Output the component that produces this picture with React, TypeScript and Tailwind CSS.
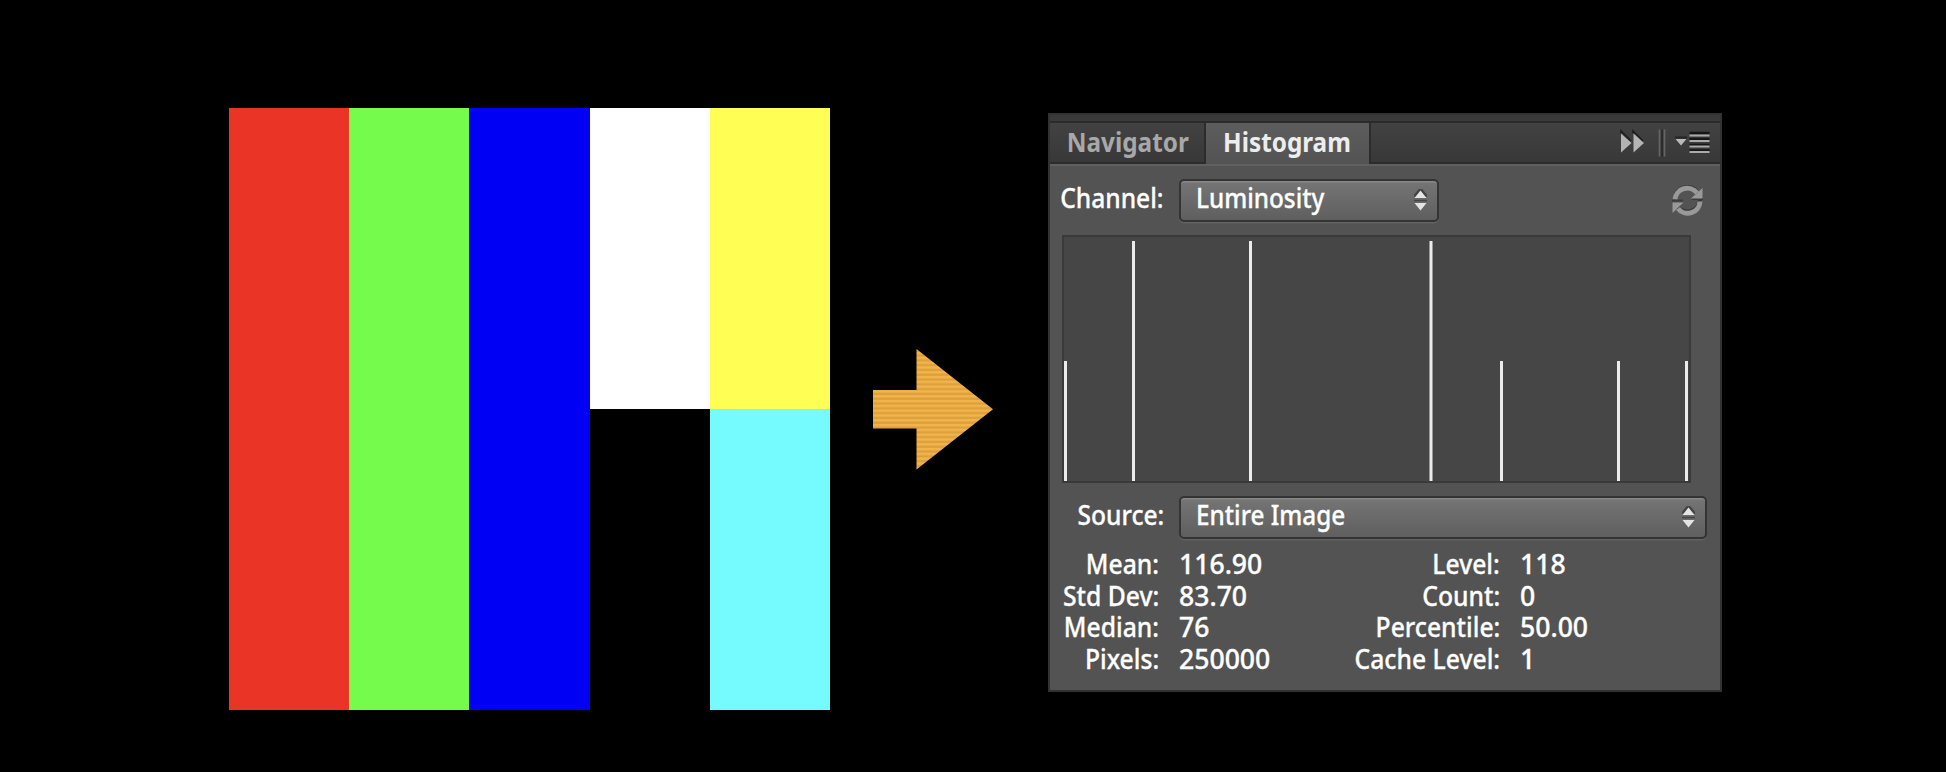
import type { ReactNode } from "react";

const bars = [
  { x: 1.5, h: 120 },
  { x: 69.5, h: 240 },
  { x: 186.5, h: 240 },
  { x: 367, h: 240 },
  { x: 437.5, h: 120 },
  { x: 554.5, h: 120 },
  { x: 622.5, h: 120 },
];

function ColorBars() {
  return (
    <div className="mt-[108px] ml-[229px] grid h-[602px] w-[601px] shrink-0 grid-cols-5">
      <div className="bg-[#ea3425]" />
      <div className="bg-[#75fb4c]" />
      <div className="bg-[#0000f5]" />
      <div className="flex flex-col">
        <div className="h-[301px] bg-white" />
        <div className="flex-1 bg-black" />
      </div>
      <div className="flex flex-col">
        <div className="h-[301px] bg-[#fffe54]" />
        <div className="flex-1 bg-[#75fbfd]" />
      </div>
    </div>
  );
}

function Arrow() {
  return (
    <svg className="mt-[349px] ml-[43px] shrink-0" width="120" height="121" viewBox="0 0 120 121">
      <defs>
        <pattern id="stripes" width="120" height="4.8" patternUnits="userSpaceOnUse">
          <rect width="120" height="4.8" fill="#f2b44a" />
          <rect y="0.6" width="120" height="2.2" fill="#dca03c" />
        </pattern>
      </defs>
      <path d="M0 41H43.5V0L120 60.3 43.5 120.5V79.500H0Z" fill="url(#stripes)" />
    </svg>
  );
}

function Select({ children, className }: { children: ReactNode; className: string }) {
  return (
    <div
      className={`flex h-[43px] items-center justify-between rounded-[5px] border-[2.5px] border-[#343434] bg-linear-to-b from-[#757575] to-[#5f5f5f] pr-[10px] pl-[15px] shadow-[0_1.500px_0_#626262,inset_0_1.500px_0_#868686] ${className}`}
    >
      <span className="origin-left scale-x-[0.9] pb-[6px]">{children}</span>
      <svg className="-mt-px" width="13" height="22" viewBox="0 0 13 22">
        <path d="M6.500 -1 0 7H13ZM0 11.500H13" fill="#444" stroke="#444" strokeWidth="1.500" />
        <path d="M6.500 1.500 0.500 9H12.500ZM0.500 14H12.500L6.500 21.500Z" fill="#e4e4e4" />
      </svg>
    </div>
  );
}

function Stat({ label, value, wide }: { label: string; value: string; wide?: boolean }) {
  return (
    <div className="flex h-[31.700px] items-center">
      <span className={`flex justify-end ${wide ? "w-[150px]" : "w-[109px]"}`}>
        <span className="origin-right scale-x-[0.915]">{label}</span>
      </span>
      <span className="ml-[20px] origin-left scale-x-[0.985]">{value}</span>
    </div>
  );
}

function Refresh() {
  return (
    <svg width="31" height="33" viewBox="0 0 31 33">
      <g fill="none" stroke="#383838" strokeWidth="4" transform="translate(0 -1.500)">
        <path d="M3 15.500A12.500 12.500 0 0 1 25 9" />
        <path d="M28 17.500A12.500 12.500 0 0 1 6 24.500" />
      </g>
      <g fill="none" stroke="#999" strokeWidth="5">
        <path d="M3 15.500A12.300 12.300 0 0 1 25 9" />
        <path d="M28 17.500A12.300 12.300 0 0 1 6 24.500" />
      </g>
      <path d="M20 14H31V16H20ZM0 15.500H11V17.500H0Z" fill="#3c3c3c" />
      <path d="M30.500 4V14.500H19ZM0.500 29V18.500H11.500Z" fill="#999" />
    </svg>
  );
}

function HistogramPanel() {
  return (
    <div className="mt-[113px] ml-[55px] flex h-[579px] w-[674px] shrink-0 flex-col border-2 border-[#323232] bg-[#535353]">
      <div className="h-[6px] shrink-0 bg-[#3a3a3a]" />
      <div className="flex h-[43px] shrink-0 border-t-2 border-[#2b2b2b] font-bold">
        <div className="flex w-[156px] items-center justify-center border-r-2 border-b-2 border-[#2c2c2c] bg-linear-to-b from-[#424242] to-[#383838] pb-[1px] pl-px text-[#a8a8a8]">
          <span className="scale-x-[0.9]">Navigator</span>
        </div>
        <div className="flex w-[163px] items-center justify-center bg-linear-to-b from-[#5d5d5d] to-[#535353] pr-[2px] pb-[3px] text-[#ededed]">
          <span className="scale-x-[0.9]">Histogram</span>
        </div>
        <div className="flex flex-1 items-start justify-end border-b-2 border-l-2 border-[#2c2c2c] bg-linear-to-b from-[#424242] to-[#383838] pr-[10px]">
          <svg className="mt-px" width="90" height="34" viewBox="0 0 90 34">
            <path d="M1 9.500V7L11 17M13 9.500V7L23 17" stroke="#1e1e1e" strokeWidth="1.600" fill="none" />
            <path d="M1 9.500V28.500L11.500 19ZM13.500 9.500V28.500L24 19Z" fill="#b4b4b4" />
            <path d="M39.500 5.500V32.500M44.500 5.500V32.500" stroke="#646464" strokeWidth="1.700" />
            <path d="M42 5.500V32.500" stroke="#2c2c2c" strokeWidth="2" />
            <path d="M55 13.500H67" stroke="#252525" strokeWidth="2" />
            <path d="M55.500 15H66.500L61 21.500Z" fill="#bababa" />
            <path d="M69.500 9H89.500M69.500 15H89.500M69.500 21H89.500M69.500 26.500H89.500" stroke="#161616" strokeWidth="2.400" />
            <path d="M69.500 11.500H89.500M69.500 17H89.500M69.500 22.500H89.500M69.500 28H89.500" stroke="#aaa" strokeWidth="2" />
          </svg>
        </div>
      </div>
      <div className="flex flex-1 flex-col border-t-2 border-[#606060] pt-[13px] text-white [-webkit-text-stroke:0.3px_white]">
        <div className="flex h-[43px] items-center">
          <span className="flex w-[114px] justify-end pb-[6px]">
            <span className="origin-right scale-x-[0.91]">Channel:</span>
          </span>
          <Select className="ml-[15px] w-[260px]">Luminosity</Select>
          <div className="ml-auto pr-[17px]">
            <Refresh />
          </div>
        </div>
        <div className="mt-[13px] ml-[12px] h-[248px] w-[629px] border-2 border-[#3a3a3a] bg-[#464646]">
          <svg width="625" height="244" viewBox="0 0 625 244">
            {bars.map((b) => (
              <rect key={b.x} x={b.x - 1.5} y={244 - b.h} width="3" height={b.h} fill="#ececec" />
            ))}
          </svg>
        </div>
        <div className="mt-[13px] flex h-[43px] items-center">
          <span className="flex w-[114px] justify-end pb-[6px]">
            <span className="origin-right scale-x-[0.91]">Source:</span>
          </span>
          <Select className="ml-[15px] w-[528px]">Entire Image</Select>
        </div>
        <div className="mt-[9px] flex">
          <div className="w-[300px] shrink-0">
            <Stat label="Mean:" value="116.90" />
            <Stat label="Std Dev:" value="83.70" />
            <Stat label="Median:" value="76" />
            <Stat label="Pixels:" value="250000" />
          </div>
          <div className="w-[300px] shrink-0">
            <Stat wide label="Level:" value="118" />
            <Stat wide label="Count:" value="0" />
            <Stat wide label="Percentile:" value="50.00" />
            <Stat wide label="Cache Level:" value="1" />
          </div>
        </div>
      </div>
    </div>
  );
}

export default function App() {
  return (
    <div className="flex h-[772px] w-[1946px] items-start overflow-hidden bg-black font-['Noto_Sans',sans-serif] text-[27px] leading-[32px] font-medium whitespace-nowrap">
      <ColorBars />
      <Arrow />
      <HistogramPanel />
    </div>
  );
}
